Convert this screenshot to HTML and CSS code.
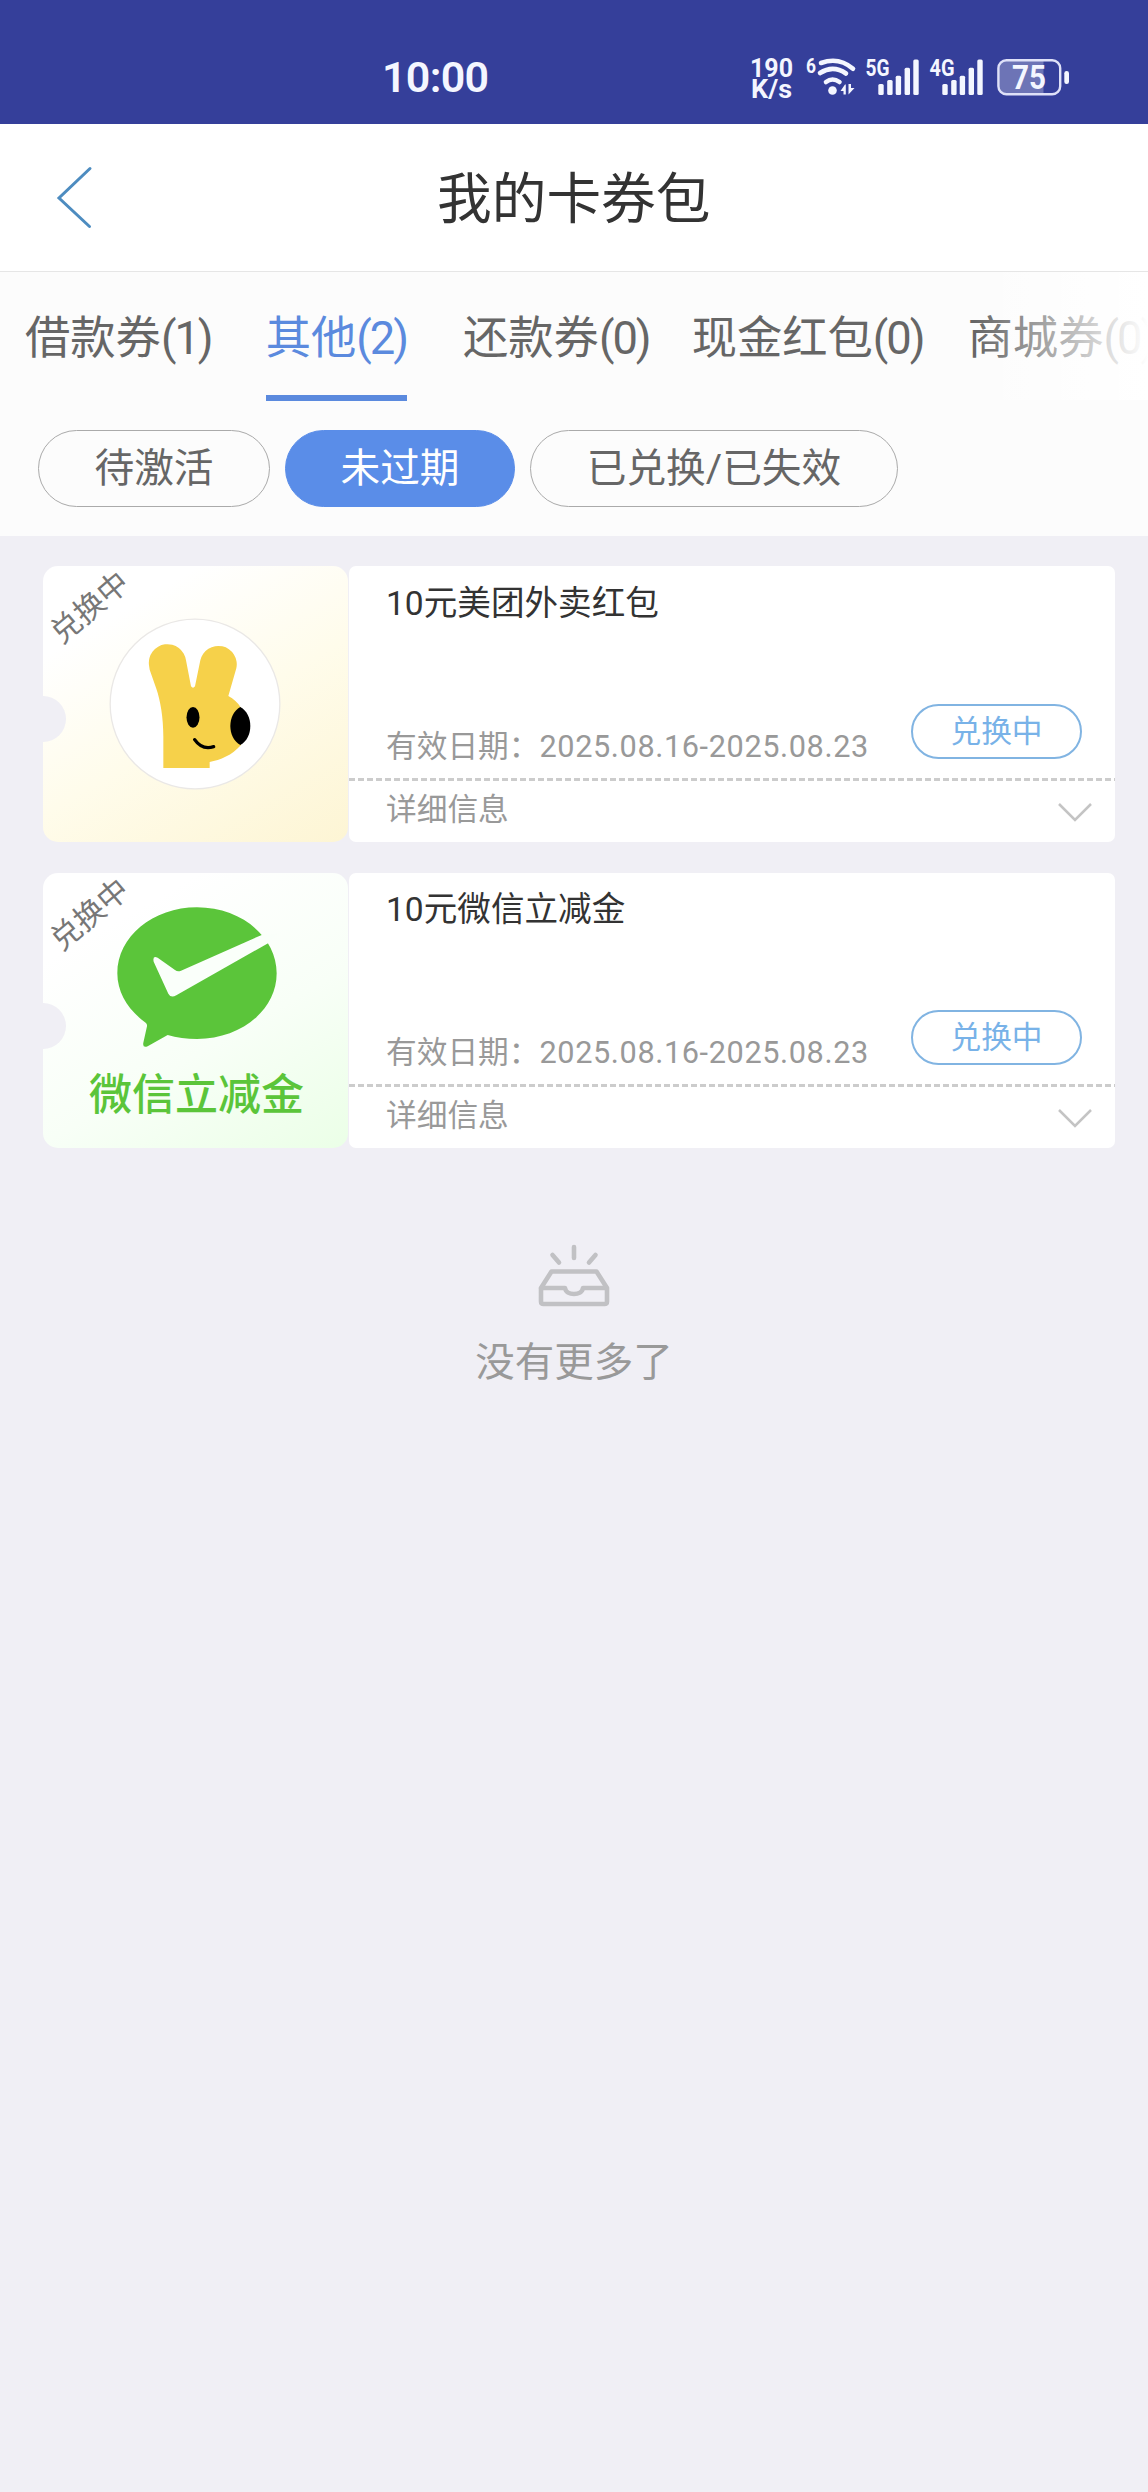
FILE: index.html
```html
<!DOCTYPE html>
<html lang="zh-CN">
<head>
<meta charset="utf-8">
<title>我的卡券包</title>
<link rel="stylesheet" href="styles.css">
</head>
<body>
<header class="status">
  <div class="status-time">10:00</div>
  <svg class="status-icons" width="330" height="60" viewBox="0 0 330 60">
    <g fill="#f4f6ff" font-weight="700">
      <text x="0" y="27" font-size="26" textLength="43" lengthAdjust="spacingAndGlyphs">190</text>
      <text x="1" y="47.500" font-size="26" textLength="41" lengthAdjust="spacingAndGlyphs">K/s</text>
      <text x="56" y="23" font-size="20" textLength="10" lengthAdjust="spacingAndGlyphs">6</text>
      <circle cx="82.500" cy="40.500" r="4.300"/>
      <path d="M95 34.500l-4.500 6.500h3v3.500h2.300v-10zM98.500 34v10.500l6-6.500h-3.500v-4z"/>
      <text x="115.500" y="26" font-size="23" textLength="24" lengthAdjust="spacingAndGlyphs">5G</text>
      <rect x="128.300" y="34" width="5.400" height="11" rx="1.500"/>
      <rect x="137.200" y="30" width="5.400" height="15" rx="1.500"/>
      <rect x="145.700" y="25.700" width="5.400" height="19.300" rx="1.500"/>
      <rect x="154.600" y="17.700" width="5.400" height="27.300" rx="1.500"/>
      <rect x="163.300" y="9.500" width="5.400" height="35.500" rx="1.500"/>
      <text x="179.500" y="26" font-size="23" textLength="25" lengthAdjust="spacingAndGlyphs">4G</text>
      <rect x="192.300" y="34" width="5.400" height="11" rx="1.500"/>
      <rect x="201.200" y="30" width="5.400" height="15" rx="1.500"/>
      <rect x="209.700" y="25.700" width="5.400" height="19.300" rx="1.500"/>
      <rect x="218.600" y="17.700" width="5.400" height="27.300" rx="1.500"/>
      <rect x="227.300" y="9.500" width="5.400" height="35.500" rx="1.500"/>
      <rect x="314.300" y="21" width="4.700" height="13" rx="2.300"/>
    </g>
    <g fill="none" stroke="#f4f6ff" stroke-linecap="round" stroke-width="4.600">
      <path d="M71 13Q89 6.500 103 18.800"/>
      <path d="M70 23Q83 14.500 96 23.500"/>
      <path d="M76 32Q82.500 27 89.500 32"/>
    </g>
    <path d="M256 11h37.500v33H256q-7-1-7-8V19q0-7 7-8z" fill="#fff" opacity=".28"/>
    <rect x="248.400" y="10.200" width="61.800" height="34" rx="8" fill="none" stroke="#dfe1f8" stroke-width="2.400"/>
    <text x="262" y="39" font-size="33" font-weight="700" fill="#f4f6ff" textLength="34" lengthAdjust="spacingAndGlyphs">75</text>
  </svg>
</header>

<nav class="titlebar">
  <svg class="back" width="38" height="64" viewBox="0 0 38 64"><path d="M34 2.500L3 32 33.500 60.500" fill="none" stroke="#4d8cc0" stroke-width="3" stroke-linecap="round"/></svg>
  <h1>我的卡券包</h1>
</nav>

<section class="filters">
  <div class="tabs">
    <div class="tab tab-loan">借款券<span>(1)</span></div>
    <div class="tab tab-other active">其他<span>(2)</span></div>
    <div class="tab tab-repay">还款券<span>(0)</span></div>
    <div class="tab tab-cash">现金红包<span>(0)</span></div>
    <div class="tab">商城券<span>(0)</span></div>
  </div>
  <div class="pills">
    <div class="pill pill-wait">待激活</div>
    <div class="pill pill-on">未过期</div>
    <div class="pill pill-done">已兑换/已失效</div>
  </div>
</section>

<main>
  <article class="card meituan">
    <div class="thumb">
      <div class="corner">兑换中</div>
      <div class="notch"></div>
      <svg width="172" height="172" viewBox="266 203 516 516">
        <circle cx="524" cy="461" r="254.500" fill="#fff" stroke="#eae8e6" stroke-width="4"/>
        <path fill="#f6d14a" d="M386 345A56 56 0 0 1 497 330L512 408Q518 416 524 408L540 330A55 55 0 0 1 648 354L624 437C640 446 652 456 662 472V584C635 615 600 629 568 635V653H429V560C429 500 420 450 408 415L388 358Z"/>
        <ellipse cx="518" cy="501" rx="19.500" ry="31"/>
        <path d="M660 470C700 492 700 562 660 584C620 562 620 492 660 470Z"/>
        <path d="M523 568Q545 600 580 589" fill="none" stroke="#000" stroke-width="10" stroke-linecap="round"/>
      </svg>
    </div>
    <div class="info">
      <div class="main">
        <h2>10元美团外卖红包</h2>
        <div class="line"><p class="date">有效日期：<span>2025.08.16-2025.08.23</span></p><div class="btn">兑换中</div></div>
      </div>
      <div class="dash"></div>
      <div class="detail"><span>详细信息</span><svg width="36" height="20" viewBox="0 0 36 20"><path d="M2 2L18 18 34 2" fill="none" stroke="#c4c4c4" stroke-width="2.500"/></svg></div>
    </div>
  </article>

  <article class="card wechat">
    <div class="thumb">
      <div class="corner">兑换中</div>
      <div class="notch"></div>
      <svg width="160" height="141" viewBox="290 142 480 423">
        <path fill="#5bc53a" d="M530 143C662 143 769 231 769 341S662 538 530 538C500 538 468 534 442 526L382 560Q366 566 369 549L380 500Q381 493 376 489C325 453 291 400 291 341C291 231 398 143 530 143Z"/>
        <path fill="#fafffa" d="M400 306Q396 287 412 294L464 331Q472 337 482 333L726 225 770 222 746 249 468 407Q451 416 444 402Z"/>
      </svg>
      <strong>微信立减金</strong>
    </div>
    <div class="info">
      <div class="main">
        <h2>10元微信立减金</h2>
        <div class="line"><p class="date">有效日期：<span>2025.08.16-2025.08.23</span></p><div class="btn">兑换中</div></div>
      </div>
      <div class="dash"></div>
      <div class="detail"><span>详细信息</span><svg width="36" height="20" viewBox="0 0 36 20"><path d="M2 2L18 18 34 2" fill="none" stroke="#c4c4c4" stroke-width="2.500"/></svg></div>
    </div>
  </article>
</main>

<footer class="empty">
  <svg width="72" height="63" viewBox="0 0 72 63" fill="none" stroke="#c1c1c4" stroke-width="4.600" stroke-linecap="round" stroke-linejoin="round">
    <path d="M36 3V14M14.500 11L21 18.500M57.500 11L51 18.500"/>
    <path d="M3 44L13.500 27.500H58.500L69 44V57.500Q69 60 66.500 60H5.500Q3 60 3 57.500V44H27C28 52 44 52 45 44H69"/>
  </svg>
  <p>没有更多了</p>
</footer>
</body>
</html>
```

FILE: styles.css
```css
* { box-sizing: border-box; margin: 0; padding: 0; }
body {
  width: 1148px;
  min-height: 2492px;
  overflow-x: hidden;
  background: #f0eff5;
  color: #666;
  font-family: Roboto, "Noto Sans CJK SC", sans-serif;
}
svg { display: block; flex: none; }

.status {
  display: flex;
  align-items: center;
  height: 124px;
  padding-left: 382px;
  background: #353f9a;
}
.status-time {
  width: 368px;
  padding-top: 30px;
  height: 124px;
  line-height: 94px;
  font-size: 43px;
  font-weight: 600;
  letter-spacing: -.7px;
  color: #f4f6ff;
}
.status-icons { margin-top: 36px; }

.titlebar {
  display: flex;
  align-items: center;
  height: 148px;
  padding-left: 56px;
  background: #fff;
  border-bottom: 1px solid #e6e6e6;
}
.titlebar h1 {
  margin-left: 343px;
  padding-top: 3px;
  line-height: 80px;
  font-size: 54.700px;
  font-weight: 400;
  color: #333;
}

.filters { height: 264px; background: #fcfcfc; overflow: hidden; }
.tabs {
  position: relative;
  display: flex;
  height: 129px;
  padding-left: 25px;
  font-size: 45.300px;
  line-height: 133px;
  white-space: nowrap;
}
.tabs::after {
  content: "";
  position: absolute;
  top: 0;
  right: 0;
  width: 174px;
  height: 128px;
  background: linear-gradient(90deg, rgba(255,255,255,0), #fff);
}
.tab { flex: none; }
.tab-loan { margin-right: 54px; }
.tab-other { margin-right: 56px; }
.tab-repay { margin-right: 42px; }
.tab-cash { margin-right: 44px; }
.tab span { letter-spacing: -2px; }
.tab.active { color: #5b8ade; border-bottom: 6px solid #5b8ade; }

.pills { display: flex; gap: 15px; padding: 29px 38px 0; }
.pill {
  height: 77px;
  border: 1px solid #aaa;
  border-radius: 39px;
  font-size: 39.700px;
  line-height: 75px;
  text-align: center;
}
.pill-wait { width: 232px; }
.pill-on { width: 230px; color: #fff; background: #5a8de8; border-color: #5a8de8; }
.pill-done { width: 368px; }

main { display: flex; flex-direction: column; gap: 31px; padding: 30px 33px 0 43px; }
.card { display: flex; gap: 1px; height: 276px; }
.card.wechat { height: 275px; }
.thumb {
  position: relative;
  display: flex;
  flex-direction: column;
  align-items: center;
  width: 305px;
  border-radius: 15px;
  overflow: hidden;
}
.meituan .thumb { padding: 52px 2px 0 0; background: linear-gradient(150deg, #fff 20%, #fffceb 55%, #fdf5d4); }
.wechat .thumb { padding: 34px 0 0 2px; background: linear-gradient(150deg, #fff 20%, #f8fff7 60%, #ebffe7); }
.thumb strong {
  margin-top: 18px;
  font-size: 43px;
  line-height: 58px;
  font-weight: 500;
  color: #5bc53a;
}
.corner {
  position: absolute;
  left: -4px;
  top: 22px;
  width: 102px;
  line-height: 40px;
  font-size: 30.500px;
  text-align: center;
  color: #777;
  transform: rotate(-40deg);
}
.notch {
  position: absolute;
  left: -23px;
  top: 130px;
  width: 46px;
  height: 46px;
  border-radius: 50%;
  background: #f0eff5;
}

.info {
  flex: 1;
  display: flex;
  flex-direction: column;
  border-radius: 7px;
  background: #fff;
}
.main {
  flex: 1;
  display: flex;
  flex-direction: column;
  justify-content: space-between;
  padding: 13px 33px 19px 37px;
}
.wechat .main { padding-top: 12px; }
.main h2 { font-size: 33.600px; line-height: 50px; font-weight: 400; color: #333; }
.line { display: flex; justify-content: space-between; height: 55px; }
.date { font-size: 30.700px; line-height: 86px; color: #999; white-space: nowrap; }
.date span { letter-spacing: .6px; }
.btn {
  width: 171px;
  height: 55px;
  border: 2px solid #81b4e2;
  border-radius: 28px;
  font-size: 30.700px;
  line-height: 52px;
  text-align: center;
  color: #78b2e8;
}
.dash { height: 3px; background: repeating-linear-gradient(90deg, #ccc 0 6px, #fff 6px 9px); }
.detail {
  display: flex;
  align-items: center;
  justify-content: space-between;
  height: 61px;
  padding: 0 22px 0 37px;
  font-size: 30.700px;
  color: #999;
}
.detail span { line-height: 56px; padding-bottom: 3px; }

.empty { display: flex; flex-direction: column; align-items: center; padding-top: 96px; }
.empty p { margin-top: 26px; font-size: 39.500px; line-height: 60px; color: #999; }
```
